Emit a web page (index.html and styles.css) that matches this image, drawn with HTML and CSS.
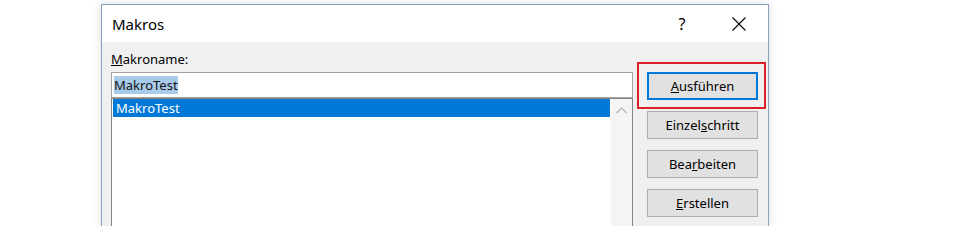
FILE: index.html
```html
<!DOCTYPE html>
<html lang="de">
<head>
<meta charset="utf-8">
<title>Makros</title>
<link rel="stylesheet" href="styles.css">
</head>
<body>
<div class="stage">
  <div class="dialog">
    <div class="titlebar">
      <span class="title">Makros</span>
      <span class="help">?</span>
      <span class="close">
        <svg width="14" height="14" viewBox="0 0 14 14"><path d="M0.5 0.5 L13.5 13.5 M13.5 0.5 L0.5 13.5" stroke="#000" stroke-width="1.1" fill="none"/></svg>
      </span>
    </div>
    <div class="content">
      <div class="label"><u>M</u>akroname:</div>
      <div class="left">
        <div class="input"><span class="sel">MakroTest</span></div>
        <div class="list">
          <div class="items">
            <div class="item selected">MakroTest</div>
          </div>
          <div class="scrollbar">
            <svg class="chev" width="11" height="7" viewBox="0 0 11 7"><path d="M0.5 6 L5.5 1 L10.5 6" stroke="#b4b4b4" stroke-width="1.2" fill="none"/></svg>
          </div>
        </div>
      </div>
      <div class="buttons">
        <div class="btn-wrap">
          <button class="btn primary"><u>A</u>usführen</button>
          <span class="mark"></span>
        </div>
        <button class="btn">Einzel<u>s</u>chritt</button>
        <button class="btn">Bea<u>r</u>beiten</button>
        <button class="btn"><u>E</u>rstellen</button>
      </div>
    </div>
  </div>
</div>
</body>
</html>
```

FILE: styles.css
```css
html, body {
  margin: 0;
  padding: 0;
  background: #ffffff;
  height: 226px;
  overflow: hidden;
}
body {
  font-family: "Noto Sans", "Open Sans", sans-serif;
  font-size: 13px;
  color: #000;
}
.stage {
  padding: 4px 0 0 101px;
}
.dialog {
  width: 668px;
  height: 222px;
  box-sizing: border-box;
  border: 1px solid #8aa2bf;
  border-bottom: none;
  background: #f0f0f0;
  box-shadow: 0 0 9px rgba(0, 0, 0, 0.14);
}
.titlebar {
  height: 37px;
  background: #ffffff;
  display: flex;
  align-items: center;
  padding: 0 6px 0 10px;
  gap: 11px;
}
.title {
  flex: 1;
  font-size: 15px;
  padding-top: 1px;
}
.help {
  width: 46px;
  text-align: center;
  font-size: 16px;
  padding-top: 1px;
}
.close {
  width: 46px;
  display: flex;
  justify-content: center;
  align-items: center;
}
.close svg { display: block; }
.content {
  display: grid;
  grid-template-columns: 522px 111px;
  column-gap: 14px;
  padding: 8px 0 0 9px;
}
.label {
  grid-column: 1 / span 2;
  line-height: 18px;
  margin-bottom: 4px;
}
.input {
  height: 26px;
  box-sizing: border-box;
  border: 1px solid #a3a3a3;
  background: #fff;
  padding: 3px 0 0 2px;
}
.sel {
  display: inline-block;
  background: #a9cbea;
  color: #111;
  line-height: 18px;
  height: 18px;
}
.list {
  height: 130px;
  box-sizing: border-box;
  border: 1px solid #848484;
  border-bottom: none;
  background: #fff;
  display: flex;
}
.items {
  flex: 1;
  padding: 0 1px;
}
.item {
  height: 18px;
  line-height: 18px;
  padding-left: 3px;
}
.item.selected {
  background: #0078d7;
  color: #fff;
}
.scrollbar {
  width: 21px;
  background: #f4f4f4;
  display: flex;
  justify-content: center;
  padding-top: 8px;
  box-sizing: border-box;
}
.chev { display: block; }
.buttons {
  display: flex;
  flex-direction: column;
  gap: 11px;
}
.btn-wrap {
  position: relative;
}
.btn {
  width: 111px;
  height: 28px;
  box-sizing: border-box;
  background: #e1e1e1;
  border: 1px solid #adadad;
  font-family: "Noto Sans", "Open Sans", sans-serif;
  font-size: 13px;
  color: #000;
  padding: 0;
  display: block;
}
.btn.primary {
  border: 2px solid #0078d7;
}
.mark {
  position: absolute;
  left: -10px;
  top: -10px;
  right: -8px;
  bottom: -9px;
  border: 2px solid #dc1f2b;
  pointer-events: none;
}
```
